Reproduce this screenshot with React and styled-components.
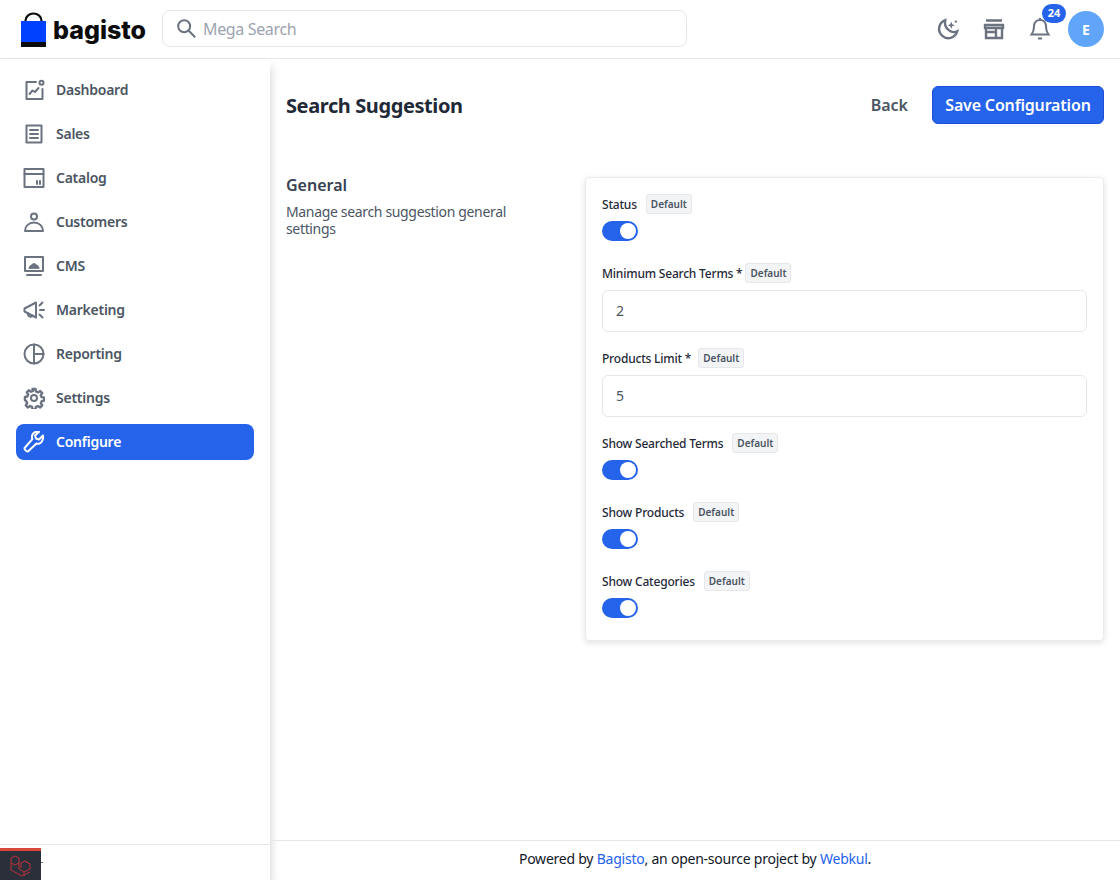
import React from 'react'
import styled, { createGlobalStyle } from 'styled-components'

const FONT = '"Noto Sans", "Open Sans", sans-serif'

const GlobalStyle = createGlobalStyle`
  html, body, #root {
    height: 100%;
  }
  body {
    margin: 0;
    background: #fff;
    font-family: ${FONT};
    color: #1f2937;
  }
  * {
    box-sizing: border-box;
  }
`

const Page = styled.div`
  display: flex;
  flex-direction: column;
  height: 880px;
  overflow: hidden;
  position: relative;
`

const Header = styled.header`
  display: flex;
  align-items: center;
  justify-content: space-between;
  height: 59px;
  flex: none;
  padding: 0 16px 0 21px;
  border-bottom: 1px solid #e5e7eb;
`

const HeaderLeft = styled.div`
  display: flex;
  align-items: center;
`

const Logo = styled.div`
  display: flex;
  align-items: center;
  gap: 7px;
  width: 141px;
`

const LogoText = styled.span`
  font-family: Inter, sans-serif;
  font-weight: 800;
  font-size: 25px;
  line-height: 30px;
  color: #0b0b0b;
  margin-top: 2px;
`

const SearchBox = styled.div`
  display: flex;
  align-items: center;
  gap: 6px;
  width: 525px;
  height: 37px;
  margin-bottom: 1px;
  padding: 0 12px;
  border: 1px solid #e5e7eb;
  border-radius: 8px;
  color: #6b7280;
`

const SearchText = styled.span`
  font-size: 16px;
  letter-spacing: -0.35px;
  color: #9ca3af;
`

const HeaderRight = styled.div`
  display: flex;
  align-items: center;
`

const IconButton = styled.div`
  display: flex;
  align-items: center;
  justify-content: center;
  position: relative;
  width: 26px;
  height: 26px;
  margin-right: ${p => p.$gap}px;
  color: #6b7280;
`

const Badge = styled.span`
  position: absolute;
  top: -12px;
  left: 15px;
  width: 24px;
  height: 19px;
  border-radius: 10px;
  background: #2563eb;
  color: #fff;
  font-size: 11px;
  font-weight: 700;
  line-height: 18px;
  text-align: center;
`

const Avatar = styled.div`
  display: flex;
  align-items: center;
  justify-content: center;
  width: 36px;
  height: 36px;
  border-radius: 50%;
  background: #60a5fa;
  color: #fff;
  font-size: 14px;
  font-weight: 700;
`

const Body = styled.div`
  display: flex;
  flex: 1;
  min-height: 0;
`

const Sidebar = styled.aside`
  display: flex;
  flex-direction: column;
  justify-content: space-between;
  width: 270px;
  flex: none;
  box-shadow: 0 8px 10px rgba(0, 0, 0, 0.2);
`

const Nav = styled.nav`
  display: flex;
  flex-direction: column;
  gap: 8px;
  padding: 13px 16px 0;
`

const NavItem = styled.a`
  display: flex;
  align-items: center;
  gap: 11px;
  height: 36px;
  padding: 0 8px 0 7px;
  border-radius: 8px;
  font-size: 14px;
  font-weight: 600;
  letter-spacing: -0.25px;
  color: ${p => (p.$active ? '#fff' : '#4b5563')};
  background: ${p => (p.$active ? '#2563eb' : 'transparent')};
`

const NavLabel = styled.span`
  margin-top: -2px;
`

const NavIcon = styled.svg`
  width: 22px;
  height: 22px;
  flex: none;
  fill: none;
  stroke: ${p => (p.$active ? '#fff' : '#6b7280')};
  stroke-width: 2;
  stroke-linecap: round;
  stroke-linejoin: round;
`

const SidebarFoot = styled.div`
  height: 36px;
  border-top: 1px solid #e5e7eb;
`

const Main = styled.main`
  display: flex;
  flex-direction: column;
  flex: 1;
  min-width: 0;
`

const Content = styled.div`
  flex: 1;
  padding: 27px 16px 0 16px;
`

const TitleRow = styled.div`
  display: flex;
  align-items: center;
  justify-content: space-between;
  height: 38px;
`

const Title = styled.h1`
  margin: 0;
  font-size: 20px;
  font-weight: 700;
  letter-spacing: -0.4px;
  color: #1f2937;
`

const Actions = styled.div`
  display: flex;
  align-items: center;
  gap: 24px;
`

const BackLink = styled.a`
  font-size: 16px;
  font-weight: 600;
  color: #4b5563;
`

const SaveButton = styled.button`
  height: 38px;
  width: 172px;
  padding: 0;
  border: 1px solid #1d4ed8;
  border-radius: 6px;
  background: #2563eb;
  color: #fff;
  font-family: ${FONT};
  font-size: 16px;
  font-weight: 600;
  letter-spacing: -0.17px;
`

const Section = styled.section`
  display: flex;
  align-items: flex-start;
  margin-top: 53px;
`

const SectionInfo = styled.div`
  width: 299px;
  flex: none;
  padding-right: 60px;
`

const SectionTitle = styled.h2`
  margin: 0;
  font-size: 16px;
  font-weight: 600;
  line-height: 16px;
  color: #374151;
`

const SectionText = styled.p`
  margin: 10px 0 0;
  font-size: 14px;
  line-height: 17px;
  letter-spacing: -0.34px;
  color: #4b5563;
`

const Card = styled.div`
  flex: 1;
  padding: 16px 16px 22px;
  border: 1px solid #e9ebee;
  border-radius: 4px;
  background: #fff;
  box-shadow: 0 2px 6px rgba(0, 0, 0, 0.12);
`

const Field = styled.div`
  margin-bottom: ${p => (p.$toggle ? 22 : 16)}px;
  &:last-child {
    margin-bottom: 0;
  }
`

const LabelRow = styled.div`
  display: flex;
  align-items: center;
  gap: ${p => p.$gap}px;
  height: 20px;
  margin-bottom: 7px;
`

const Label = styled.label`
  font-size: 12px;
  font-weight: 500;
  letter-spacing: -0.2px;
  color: #1f2937;
`

const DefaultTag = styled.span`
  padding: 0 4px;
  height: 20px;
  width: 46px;
  border: 1px solid #e5e7eb;
  border-radius: 3px;
  background: #f3f4f6;
  font-size: 10px;
  font-weight: 600;
  line-height: 18px;
  text-align: center;
  color: #4b5563;
`

const Toggle = styled.div`
  position: relative;
  width: 36px;
  height: 20px;
  border-radius: 10px;
  background: #2563eb;
  &::after {
    content: '';
    position: absolute;
    top: 2px;
    right: 2px;
    width: 16px;
    height: 16px;
    border-radius: 50%;
    background: #fff;
  }
`

const TextInput = styled.input`
  display: block;
  width: 100%;
  height: 42px;
  padding: 0 13px 2px;
  border: 1px solid #e5e7eb;
  border-radius: 6px;
  font-family: ${FONT};
  font-size: 14px;
  color: #4b5563;
  outline: none;
`

const Footer = styled.footer`
  height: 40px;
  flex: none;
  border-top: 1px solid #e5e7eb;
  font-size: 14px;
  line-height: 36px;
  letter-spacing: -0.23px;
  text-align: center;
  color: #111827;
`

const FooterLink = styled.a`
  color: #2563eb;
`

const DebugBar = styled.div`
  position: absolute;
  left: 0;
  bottom: 0;
  display: flex;
  align-items: center;
  justify-content: center;
  width: 41px;
  height: 32px;
  border-top: 3px solid #d9463a;
  background: #2a2f3a;
`

const DebugDash = styled.span`
  position: absolute;
  left: 41px;
  bottom: 17px;
  width: 2px;
  height: 1px;
  background: #6b7280;
`

const navItems = [
  {
    label: 'Dashboard',
    icon: (
      <>
        <path d="M13 3H3.5v17h16V10" />
        <circle cx="18.5" cy="3.8" r="2" />
        <path d="M6.5 15l3-3.5 2.500 1.500 3.500-4" />
      </>
    )
  },
  {
    label: 'Sales',
    icon: (
      <>
        <rect x="3.500" y="2.500" width="15" height="17" />
        <path d="M7 7h8M7 11h8M7 15h8" />
      </>
    )
  },
  {
    label: 'Catalog',
    icon: (
      <>
        <rect x="1.500" y="2" width="19" height="18" />
        <path d="M1.500 7h19M14 17v-3M17 17v-3" />
      </>
    )
  },
  {
    label: 'Customers',
    icon: (
      <>
        <circle cx="11" cy="5.500" r="3" />
        <path d="M2 20c0-5 4-8.500 9-8.500s9 3.500 9 8.500z" />
      </>
    )
  },
  {
    label: 'CMS',
    icon: (
      <>
        <rect x="2" y="2" width="18" height="14" />
        <path d="M4 20h14" />
        <path d="M6 13c.5-2 1.500-3 3-3 .5-2 3.500-2 4 0 1.500 0 2.500 1 3 3z" fill="#6b7280" strokeWidth="1" />
      </>
    )
  },
  {
    label: 'Marketing',
    icon: (
      <>
        <path d="M1.500 9.500v3l11.500 6V3.500z" />
        <path d="M5 14.500c-.5 3 3.500 4.500 5 2M16.500 6.500l3-3M17 11h4M16.500 15.500l3 3" />
      </>
    )
  },
  {
    label: 'Reporting',
    icon: (
      <>
        <circle cx="11" cy="11" r="9.500" />
        <path d="M11 1.500v19M11 11h9.500" />
      </>
    )
  },
  {
    label: 'Settings',
    icon: (
      <>
        <circle cx="11" cy="11" r="3" />
        <path
          strokeWidth="2.400"
          d="M9.500 2h3l.5 2.500 2 .9 2.200-1.400 2 2.100-1.400 2.100.9 2 2.400.5v3l-2.400.5-.9 2 1.400 2.100-2 2.100-2.200-1.400-2 .9-.5 2.500h-3l-.5-2.500-2-.9-2.200 1.400-2-2.100 1.400-2.100-.9-2L1.900 13v-3l2.400-.5.9-2-1.400-2.100 2-2.100 2.200 1.400 2-.9z"
        />
      </>
    )
  },
  {
    label: 'Configure',
    active: true,
    icon: (
      <path d="M20 4.500l-4 4-3-1-1-3 4-3.500c-3-1-6.500.5-7 4-.2 1.300 0 2.300.4 3.200L2 16.500c-1.500 1.500 1.800 5 3.500 3.500l8-7.500c3.500 1.500 7.500-2.500 6.500-8z" />
    )
  }
]

const fields = [
  { label: 'Status', type: 'toggle', gap: 9 },
  { label: 'Minimum Search Terms *', value: '2', gap: 3 },
  { label: 'Products Limit *', value: '5', gap: 7 },
  { label: 'Show Searched Terms', type: 'toggle', gap: 9 },
  { label: 'Show Products', type: 'toggle', gap: 9 },
  { label: 'Show Categories', type: 'toggle', gap: 9 }
]

export default function App() {
  return (
    <Page>
      <GlobalStyle />
      <Header>
        <HeaderLeft>
          <Logo>
            <svg width="25" height="35" viewBox="0 0 25 35">
              <rect x="0" y="9" width="25" height="21" fill="#0041ff" />
              <rect x="0" y="30" width="25" height="5" fill="#0b0b0b" />
              <path d="M4.500 9V8.500a8 7 0 0 1 16 0V9" fill="none" stroke="#0b0b0b" strokeWidth="2.200" />
            </svg>
            <LogoText>bagisto</LogoText>
          </Logo>
          <SearchBox>
            <svg width="22" height="22" viewBox="0 0 24 24" fill="none" stroke="currentColor" strokeWidth="2.200">
              <circle cx="10" cy="9" r="6.500" />
              <path d="M15 14l7 7" />
            </svg>
            <SearchText>Mega Search</SearchText>
          </SearchBox>
        </HeaderLeft>
        <HeaderRight>
          <IconButton $gap={20}>
            <svg width="24" height="24" viewBox="0 0 26 26" fill="none" stroke="currentColor" strokeWidth="2.600">
              <path d="M10 3.500a10 10 0 1 0 13 12c-6 3-15-3-13-12z" />
              <path d="M16.500 5l1.100 2.900 2.900 1.100-2.900 1.100-1.100 2.900-1.100-2.900-2.900-1.100 2.900-1.100z" fill="currentColor" stroke="none" />
              <circle cx="21.500" cy="5" r="1.300" fill="currentColor" stroke="none" />
            </svg>
          </IconButton>
          <IconButton $gap={20}>
            <svg width="24" height="24" viewBox="0 0 24 24" fill="none" stroke="currentColor" strokeWidth="2.400">
              <path d="M4 3.500h16M3 8h18v3H3zM4 11v10h16V11M4 15h10M14 11v10" />
            </svg>
          </IconButton>
          <IconButton $gap={15}>
            <svg width="24" height="24" viewBox="0 0 24 24" fill="none" stroke="currentColor" strokeWidth="2">
              <path d="M12 3c-4 0-6 3-6 6.500 0 4-1 6-2.500 8h17C19 15.500 18 13.500 18 9.500 18 6 16 3 12 3zM12 1v2M10 21.500h4" />
            </svg>
            <Badge>24</Badge>
          </IconButton>
          <Avatar>E</Avatar>
        </HeaderRight>
      </Header>
      <Body>
        <Sidebar>
          <Nav>
            {navItems.map(item => (
              <NavItem key={item.label} $active={item.active}>
                <NavIcon viewBox="0 0 22 22" $active={item.active}>
                  {item.icon}
                </NavIcon>
                <NavLabel>{item.label}</NavLabel>
              </NavItem>
            ))}
          </Nav>
          <SidebarFoot />
        </Sidebar>
        <Main>
          <Content>
            <TitleRow>
              <Title>Search Suggestion</Title>
              <Actions>
                <BackLink>Back</BackLink>
                <SaveButton>Save Configuration</SaveButton>
              </Actions>
            </TitleRow>
            <Section>
              <SectionInfo>
                <SectionTitle>General</SectionTitle>
                <SectionText>Manage search suggestion general settings</SectionText>
              </SectionInfo>
              <Card>
                {fields.map(field => (
                  <Field key={field.label} $toggle={field.type === 'toggle'}>
                    <LabelRow $gap={field.gap}>
                      <Label>{field.label}</Label>
                      <DefaultTag>Default</DefaultTag>
                    </LabelRow>
                    {field.type === 'toggle' ? (
                      <Toggle />
                    ) : (
                      <TextInput defaultValue={field.value} />
                    )}
                  </Field>
                ))}
              </Card>
            </Section>
          </Content>
          <Footer>
            Powered by <FooterLink>Bagisto</FooterLink>, an open-source project by{' '}
            <FooterLink>Webkul</FooterLink>.
          </Footer>
        </Main>
      </Body>
      <DebugBar>
        <svg width="24" height="24" viewBox="0 0 24 24" fill="none" stroke="#b8323a" strokeWidth="1">
          <path d="M2 4l4-2 4 2v11l5 3 6-3v-5l-5-3-4 2v5M10 9l-4 2-4-2M2 4v12l11 6 8-4M15 18v4M16 7l5 3" />
        </svg>
      </DebugBar>
      <DebugDash />
    </Page>
  )
}
